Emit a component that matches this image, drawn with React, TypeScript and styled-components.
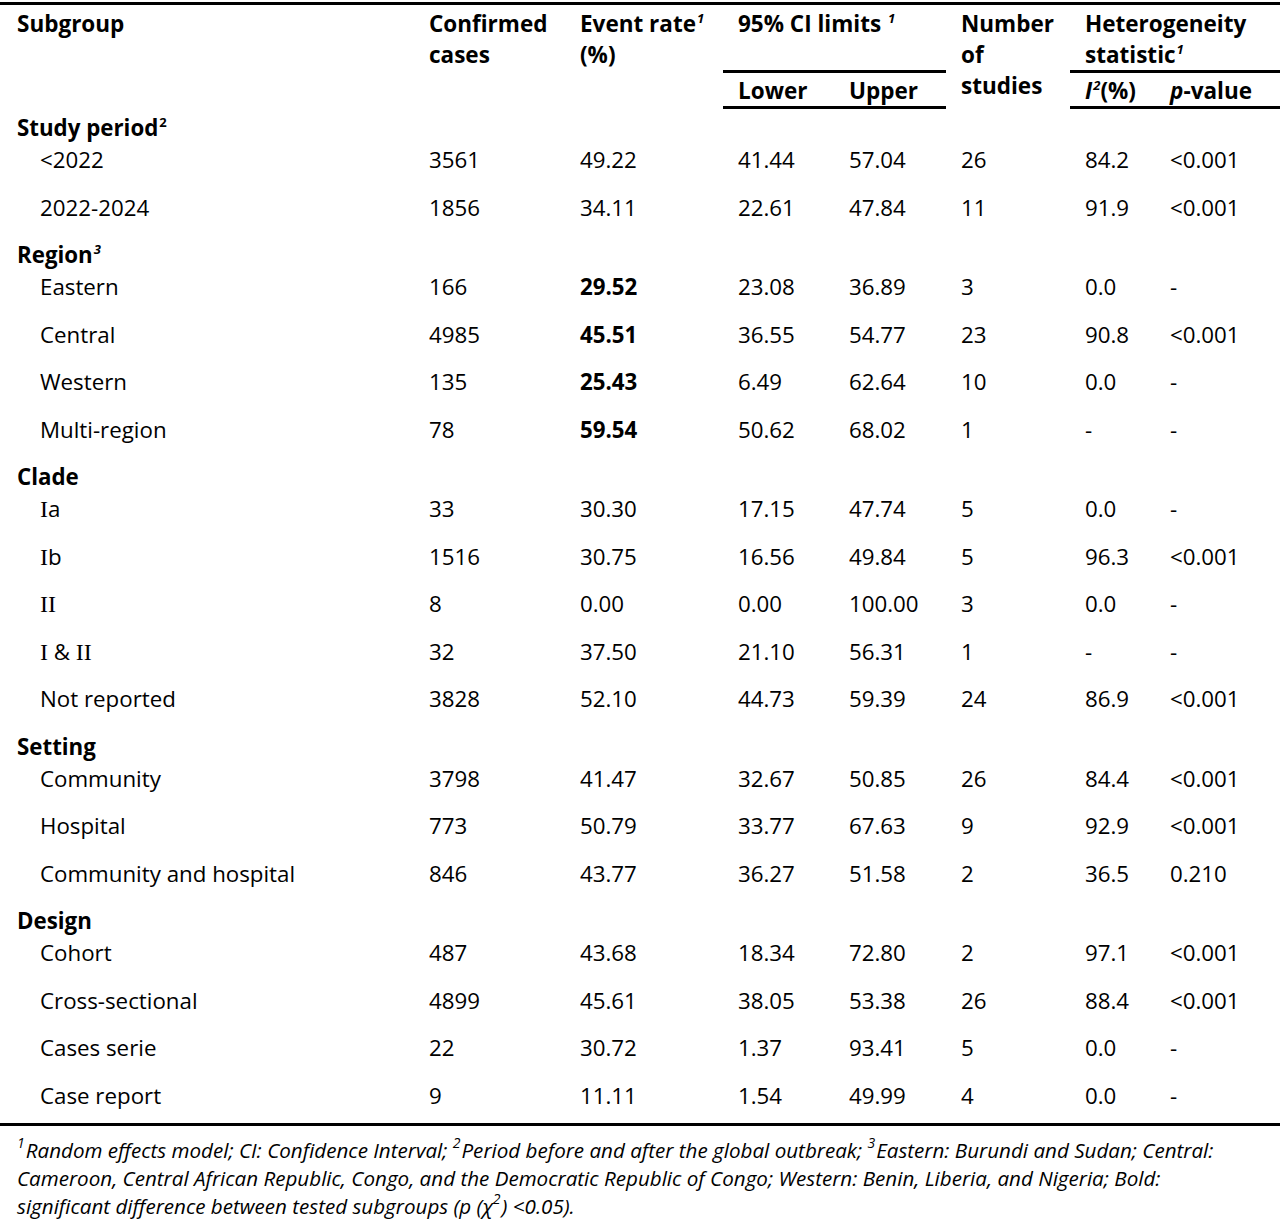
import React from "react";
import styled, { createGlobalStyle } from "styled-components";

const GlobalStyle = createGlobalStyle`
  html, body {
    margin: 0;
    padding: 0;
    background: #ffffff;
  }
  body {
    font-family: "Open Sans", "Noto Sans", sans-serif;
    color: #000000;
  }
`;

type Row = {
  label: React.ReactNode;
  values: string[];
  boldRate?: boolean;
};

type Group = {
  title: string;
  sup: string;
  italicSup?: boolean;
  rows: Row[];
};

const Roman = styled.span`
  font-family: "Liberation Serif", "DejaVu Serif", serif;
  font-size: 24px;
`;

const groups: Group[] = [
  {
    title: "Study period",
    sup: "2",
    rows: [
      { label: "<2022", values: ["3561", "49.22", "41.44", "57.04", "26", "84.2", "<0.001"] },
      { label: "2022-2024", values: ["1856", "34.11", "22.61", "47.84", "11", "91.9", "<0.001"] },
    ],
  },
  {
    title: "Region",
    sup: "3",
    italicSup: true,
    rows: [
      { label: "Eastern", values: ["166", "29.52", "23.08", "36.89", "3", "0.0", "-"], boldRate: true },
      { label: "Central", values: ["4985", "45.51", "36.55", "54.77", "23", "90.8", "<0.001"], boldRate: true },
      { label: "Western", values: ["135", "25.43", "6.49", "62.64", "10", "0.0", "-"], boldRate: true },
      { label: "Multi-region", values: ["78", "59.54", "50.62", "68.02", "1", "-", "-"], boldRate: true },
    ],
  },
  {
    title: "Clade",
    sup: "",
    rows: [
      { label: <><Roman>I</Roman>a</>, values: ["33", "30.30", "17.15", "47.74", "5", "0.0", "-"] },
      { label: <><Roman>I</Roman>b</>, values: ["1516", "30.75", "16.56", "49.84", "5", "96.3", "<0.001"] },
      { label: <Roman>II</Roman>, values: ["8", "0.00", "0.00", "100.00", "3", "0.0", "-"] },
      { label: <><Roman>I</Roman> &amp; <Roman>II</Roman></>, values: ["32", "37.50", "21.10", "56.31", "1", "-", "-"] },
      { label: "Not reported", values: ["3828", "52.10", "44.73", "59.39", "24", "86.9", "<0.001"] },
    ],
  },
  {
    title: "Setting",
    sup: "",
    rows: [
      { label: "Community", values: ["3798", "41.47", "32.67", "50.85", "26", "84.4", "<0.001"] },
      { label: "Hospital", values: ["773", "50.79", "33.77", "67.63", "9", "92.9", "<0.001"] },
      { label: "Community and hospital", values: ["846", "43.77", "36.27", "51.58", "2", "36.5", "0.210"] },
    ],
  },
  {
    title: "Design",
    sup: "",
    rows: [
      { label: "Cohort", values: ["487", "43.68", "18.34", "72.80", "2", "97.1", "<0.001"] },
      { label: "Cross-sectional", values: ["4899", "45.61", "38.05", "53.38", "26", "88.4", "<0.001"] },
      { label: "Cases serie", values: ["22", "30.72", "1.37", "93.41", "5", "0.0", "-"] },
      { label: "Case report", values: ["9", "11.11", "1.54", "49.99", "4", "0.0", "-"] },
    ],
  },
];

const colWidths = [414, 151, 158, 111, 112, 124, 85, 125];

const Page = styled.div`
  width: 1280px;
  padding-top: 2px;
`;

const Table = styled.table`
  width: 1280px;
  border-collapse: collapse;
  table-layout: fixed;
  font-size: 22.3px;
`;

const HeadCell = styled.th<{ $first?: boolean; $rule?: boolean }>`
  text-align: left;
  vertical-align: top;
  font-weight: 700;
  font-size: 22.5px;
  line-height: 31px;
  padding: 3px 0 0 ${(p) => (p.$first ? "17px" : "15px")};
  border-top: 3px solid #000;
  border-bottom: ${(p) => (p.$rule ? "3px solid #000" : "none")};
`;

const SubRow = styled.tr`
  & > th {
    border-top: none;
    border-bottom: 3px solid #000;
    padding-top: 3px;
    line-height: 30px;
  }
`;

const Sup = styled.sup<{ $italic?: boolean }>`
  font-size: 13px;
  font-style: ${(p) => (p.$italic ? "italic" : "normal")};
  vertical-align: 9px;
  line-height: 0;
  margin-left: 1px;
`;

const Em = styled.em`
  font-style: italic;
`;

const GroupRow = styled.tr`
  height: 32px;
`;

const GroupCell = styled.td`
  font-weight: 700;
  vertical-align: top;
  line-height: 26px;
  padding: 6px 0 0 17px;
`;

const DataRow = styled.tr<{ $last?: boolean }>`
  height: 47.5px;
  & > td {
    border-bottom: ${(p) => (p.$last ? "3px solid #000" : "none")};
  }
`;

const Cell = styled.td<{ $indent?: boolean; $bold?: boolean }>`
  vertical-align: top;
  line-height: 26px;
  padding: 6px 0 0 ${(p) => (p.$indent ? "40px" : "15px")};
  font-weight: ${(p) => (p.$bold ? 700 : 400)};
  white-space: nowrap;
`;

const Notes = styled.div`
  padding: 10px 0 0 17px;
  font-size: 20.6px;
  font-style: italic;
  line-height: 28px;
`;

const NoteLine = styled.div`
  white-space: nowrap;
`;

const NoteSup = styled.sup`
  font-size: 14px;
  vertical-align: 10px;
  line-height: 0;
  margin-right: 1px;
`;

const App = () => {
  const lastGroup = groups.length - 1;
  return (
    <Page>
      <GlobalStyle />
      <Table>
        <colgroup>
          {colWidths.map((w, i) => (
            <col key={i} style={{ width: w }} />
          ))}
        </colgroup>
        <thead>
          <tr>
            <HeadCell $first rowSpan={2}>Subgroup</HeadCell>
            <HeadCell rowSpan={2}>
              Confirmed
              <br />
              cases
            </HeadCell>
            <HeadCell rowSpan={2}>
              Event rate<Sup $italic>1</Sup>
              <br />
              (%)
            </HeadCell>
            <HeadCell $rule colSpan={2}>
              95% CI limits <Sup $italic>1</Sup>
              <br />
              &nbsp;
            </HeadCell>
            <HeadCell rowSpan={2}>
              Number
              <br />
              of
              <br />
              studies
            </HeadCell>
            <HeadCell $rule colSpan={2}>
              Heterogeneity
              <br />
              statistic<Sup $italic>1</Sup>
            </HeadCell>
          </tr>
          <SubRow>
            <HeadCell>Lower</HeadCell>
            <HeadCell>Upper</HeadCell>
            <HeadCell>
              <Em>I</Em>
              <Sup $italic>2</Sup>(%)
            </HeadCell>
            <HeadCell>
              <Em>p</Em>-value
            </HeadCell>
          </SubRow>
        </thead>
        <tbody>
          {groups.map((g, gi) => (
            <React.Fragment key={g.title}>
              <GroupRow>
                <GroupCell colSpan={8}>
                  {g.title}
                  {g.sup && <Sup $italic={g.italicSup}>{g.sup}</Sup>}
                </GroupCell>
              </GroupRow>
              {g.rows.map((r, ri) => (
                <DataRow key={ri} $last={gi === lastGroup && ri === g.rows.length - 1}>
                  <Cell $indent>{r.label}</Cell>
                  {r.values.map((v, vi) => (
                    <Cell key={vi} $bold={r.boldRate && vi === 1}>
                      {v}
                    </Cell>
                  ))}
                </DataRow>
              ))}
            </React.Fragment>
          ))}
        </tbody>
      </Table>
      <Notes>
        <NoteLine>
          <NoteSup>1</NoteSup>Random effects model; CI: Confidence Interval; <NoteSup>2</NoteSup>Period before and
          after the global outbreak; <NoteSup>3</NoteSup>Eastern: Burundi and Sudan; Central:
        </NoteLine>
        <NoteLine>
          Cameroon, Central African Republic, Congo, and the Democratic Republic of Congo; Western: Benin, Liberia, and
          Nigeria; Bold:
        </NoteLine>
        <NoteLine>
          significant difference between tested subgroups (p (χ<NoteSup>2</NoteSup>) &lt;0.05).
        </NoteLine>
      </Notes>
    </Page>
  );
};

export default App;
